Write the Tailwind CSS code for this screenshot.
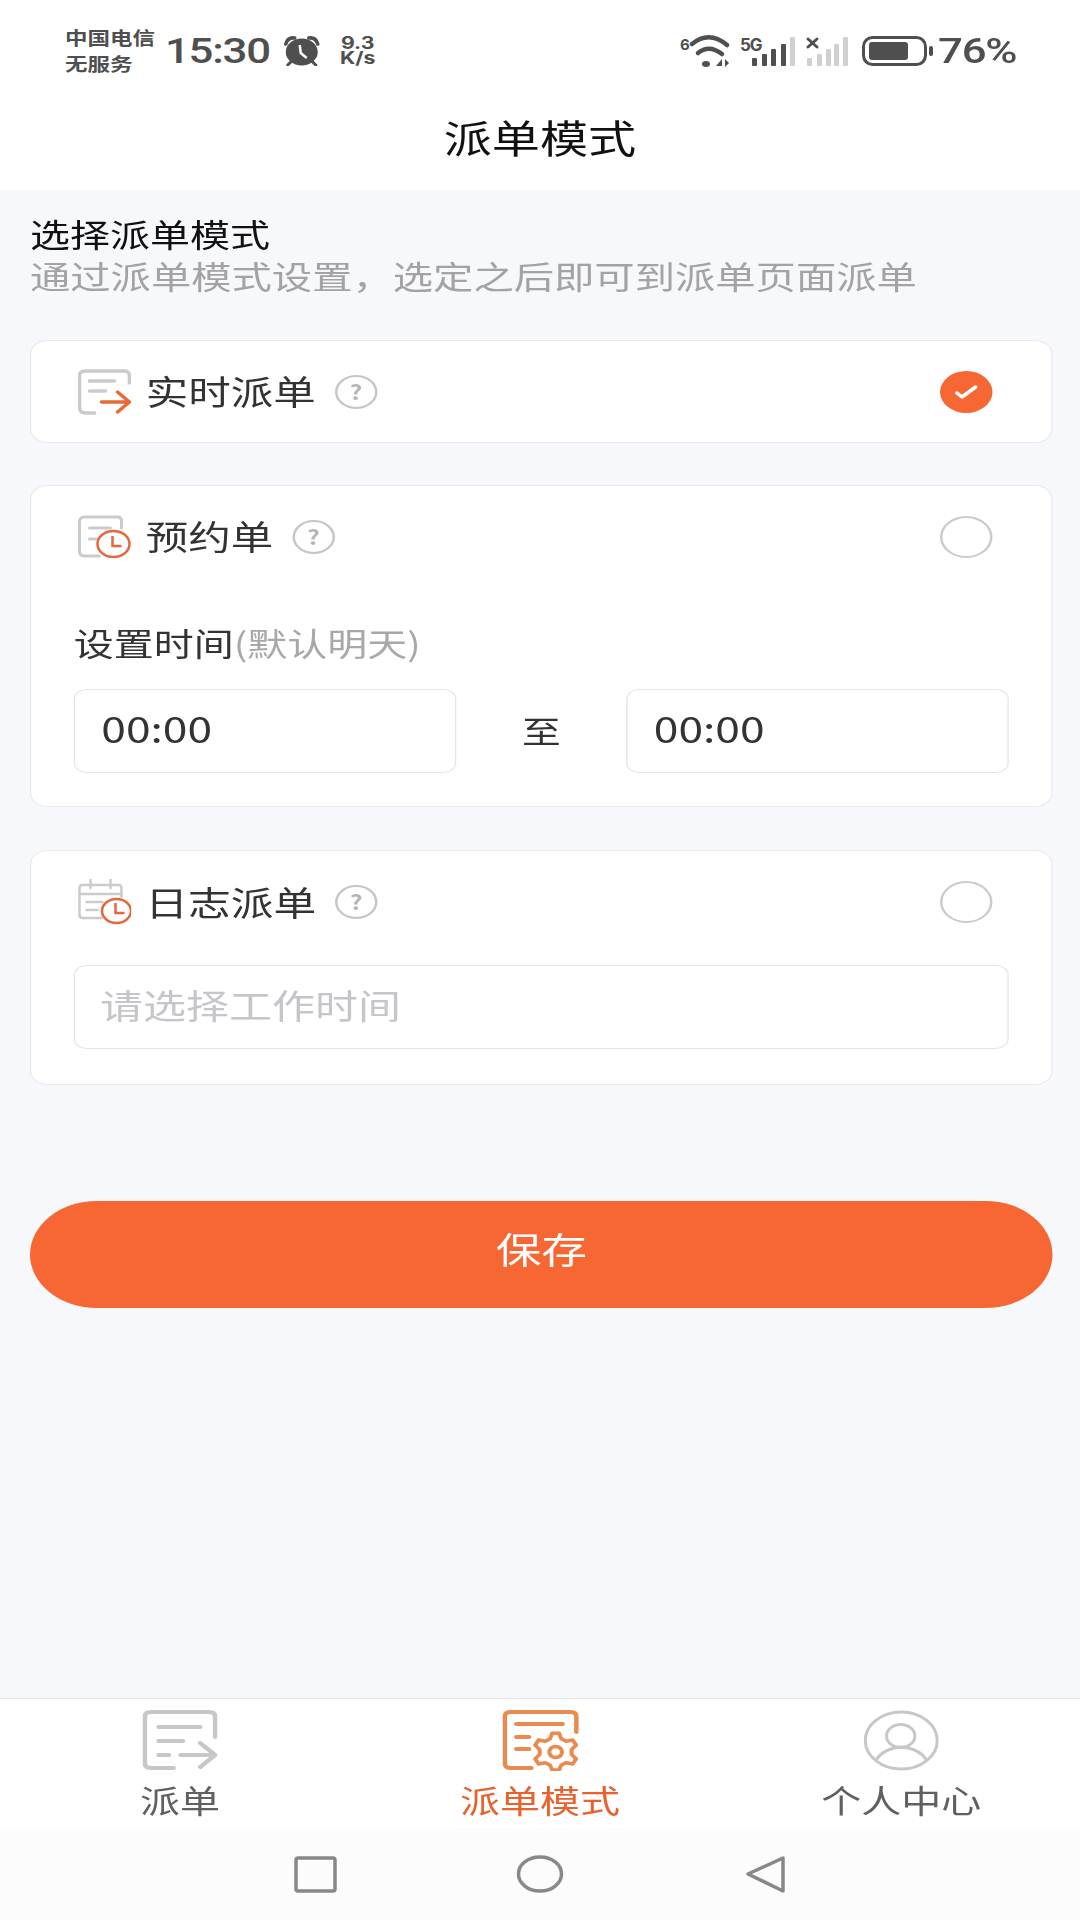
<!DOCTYPE html>
<html lang="zh-CN">
<head>
  <meta charset="UTF-8" />
  <meta name="viewport" content="width=device-width, initial-scale=1" />
  <title>派单模式</title>
  <script src="https://cdn.jsdelivr.net/npm/@tailwindcss/browser@4"></script>
</head>
<body class="w-[1080px] h-[1920px] overflow-hidden bg-[#f7f8fc]">
  <!-- the screenshot is stretched 1.25x sideways, so lay out at 864 wide and scale -->
  <div class="w-[864px] h-[1920px] origin-top-left scale-x-125 flex flex-col font-['Noto_Sans_CJK_SC',sans-serif] text-[#333]">

    <header class="bg-white h-[190px] shrink-0">
      <div class="h-[100px] pt-[24px] pl-[52px] pr-[51px] flex items-start text-[#4f4f4f]">
        <div class="w-[80px] text-[18px] leading-[26px] font-bold">
          <div>中国电信</div>
          <div>无服务</div>
        </div>
        <div class="h-[56px] flex items-center font-['Roboto',sans-serif] text-[35px] tracking-[-1px] font-medium">15:30</div>
        <svg class="mt-[12px] ml-[11px] w-[28.8px] h-[30px]" viewBox="0 0 36 30" preserveAspectRatio="none">
          <path d="M2 8 Q4 1 11 2 M25 2 Q32 1 34 8" fill="none" stroke="#4f4f4f" stroke-width="3.5" stroke-linecap="round" />
          <path d="M8 25 L4 29 M28 25 L32 29" stroke="#4f4f4f" stroke-width="3" stroke-linecap="round" />
          <ellipse cx="18" cy="16" rx="16" ry="13.5" fill="#4f4f4f" />
          <path d="M16 9 L17 17 L23 22" fill="none" stroke="#fff" stroke-width="2.5" />
        </svg>
        <div class="ml-[16px] mt-[12px] w-[29px] text-[17px] leading-[15px] font-bold font-['Inter',sans-serif] text-center">
          <div>9.3</div>
          <div>K/s</div>
        </div>
        <svg class="ml-auto mt-[6px] w-[208px] h-[40px]" viewBox="675 30 260 40" preserveAspectRatio="none">
          <text x="680" y="50" font-family="Inter, sans-serif" font-size="15" font-weight="700" fill="#4f4f4f">6</text>
          <g fill="none" stroke="#4f4f4f" stroke-linecap="round">
            <path d="M692 44 Q709 30 727 45" stroke-width="4.5" />
            <path d="M698 53 Q709 44 722 54" stroke-width="4.5" />
          </g>
          <ellipse cx="706" cy="64" rx="4" ry="3" fill="#4f4f4f" />
          <path d="M716 66 L722 59 L722 66 Z M725 59 L729 63 L725 67 Z" fill="#4f4f4f" />
          <text x="740" y="51" font-family="Inter, sans-serif" font-size="17" font-weight="700" fill="#4f4f4f" letter-spacing="-1">5G</text>
          <g fill="#4f4f4f">
            <rect x="752" y="58" width="5" height="8" rx="1" />
            <rect x="762" y="54" width="5" height="12" rx="1" />
            <rect x="771" y="49" width="5" height="17" rx="1" />
            <rect x="781" y="44" width="5" height="22" rx="1" />
          </g>
          <rect x="790" y="37" width="5" height="29" rx="1" fill="#d0d0d0" />
          <path d="M808 39 L817 47 M817 39 L808 47" stroke="#4f4f4f" stroke-width="3" stroke-linecap="round" />
          <g fill="#d0d0d0">
            <rect x="807" y="58" width="5" height="8" rx="1" />
            <rect x="817" y="54" width="5" height="12" rx="1" />
            <rect x="826" y="49" width="5" height="17" rx="1" />
            <rect x="834" y="44" width="5" height="22" rx="1" />
            <rect x="843" y="37" width="5" height="29" rx="1" />
          </g>
          <rect x="863.5" y="37.5" width="62" height="27" rx="9" fill="none" stroke="#4f4f4f" stroke-width="3" />
          <rect x="869" y="42" width="39" height="18" rx="3" fill="#4f4f4f" />
          <rect x="929" y="46" width="4" height="10" rx="2" fill="#4f4f4f" />
        </svg>
        <div class="ml-[2px] h-[56px] flex items-center font-['Roboto',sans-serif] text-[35px] tracking-[-1px] font-medium whitespace-nowrap">76%</div>
      </div>
      <div class="h-[72px] flex items-center justify-center text-[38.5px] text-[#111] leading-none">派单模式</div>
    </header>

    <main class="flex-1 pl-[24px] pr-[22px] pt-[21px]">
      <h2 class="text-[32px] leading-[44px] text-[#111]">选择派单模式</h2>
      <p class="text-[32.25px] leading-[40px] pb-[4px] text-[#a3a3a5] mb-[41px]">通过派单模式设置，选定之后即可到派单页面派单</p>

      <section class="bg-white border border-[#e9eaee] rounded-[14px] mb-[42px]">
        <div class="h-[101px] pl-[37px] pr-[47px] flex items-center">
          <svg class="w-[43.2px] h-[46px]" viewBox="0 0 54 46" preserveAspectRatio="none">
            <path d="M52 14 V7 Q52 2 47 2 H8 Q2 2 2 7 V38 Q2 44 8 44 H17" fill="none" stroke="#cbcbcb" stroke-width="3.5" stroke-linecap="round" />
            <path d="M12 12 H37 M12 22 H28" fill="none" stroke="#cbcbcb" stroke-width="3.5" stroke-linecap="round" />
            <path d="M24 33 H52 M40 23 L52 33 L40 43" fill="none" stroke="#ea6a35" stroke-width="3.5" stroke-linecap="round" stroke-linejoin="round" />
          </svg>
          <span class="ml-[11.5px] text-[34px] leading-[42px] pb-[2px]">实时派单</span>
          <span class="ml-[15px] w-[34px] h-[34px] rounded-full border-2 border-[#c6c6c6] flex items-center justify-center text-[20px] font-bold text-[#b5b5b5] leading-none">?</span>
          <span class="ml-auto w-[42px] h-[42px] rounded-full bg-[#f76733] flex items-center justify-center">
            <svg class="w-[20px] h-[16px]" viewBox="0 0 24 16" preserveAspectRatio="none">
              <path d="M3 9 L8 13 L21 3" fill="none" stroke="#fff" stroke-width="3.5" stroke-linecap="round" stroke-linejoin="round" />
            </svg>
          </span>
        </div>
      </section>

      <section class="bg-white border border-[#e9eaee] rounded-[14px] mb-[43px] h-[322px]">
        <div class="h-[101px] pl-[37px] pr-[47px] flex items-center">
          <svg class="w-[43.2px] h-[44px]" viewBox="0 0 54 44" preserveAspectRatio="none">
            <path d="M44 13 V6 Q44 2 40 2 H7 Q2 2 2 7 V36 Q2 41 7 41 H22" fill="none" stroke="#cbcbcb" stroke-width="3" stroke-linecap="round" />
            <path d="M12 13 H33 M12 24 H20" fill="none" stroke="#cbcbcb" stroke-width="3" stroke-linecap="round" />
            <ellipse cx="36" cy="29" rx="16" ry="13" fill="#fff" stroke="#e4683a" stroke-width="2.5" />
            <path d="M35 21 V31 H44" fill="none" stroke="#e4683a" stroke-width="2.5" />
          </svg>
          <span class="ml-[11.5px] text-[34px] leading-[42px] pb-[2px]">预约单</span>
          <span class="ml-[15px] w-[34px] h-[34px] rounded-full border-2 border-[#c6c6c6] flex items-center justify-center text-[20px] font-bold text-[#b5b5b5] leading-none">?</span>
          <span class="ml-auto w-[42px] h-[42px] rounded-full border-2 border-[#cbcbcb]"></span>
        </div>
        <div class="px-[34px] mt-[33px] mb-[25px] text-[32px] leading-[44px]">
          <span>设置时间</span><span class="text-[#a8a8a8]">(默认明天)</span>
        </div>
        <div class="px-[34px] flex items-center">
          <div class="w-[306px] h-[84px] pl-[21px] pb-[6px] flex items-center border border-[#e4e5ea] rounded-[10px] text-[35.5px]">00:00</div>
          <div class="flex-1 text-center text-[31px] leading-none pb-[4px]">至</div>
          <div class="w-[306px] h-[84px] pl-[21px] pb-[6px] flex items-center border border-[#e4e5ea] rounded-[10px] text-[35.5px]">00:00</div>
        </div>
      </section>

      <section class="bg-white border border-[#e9eaee] rounded-[14px] h-[235px]">
        <div class="h-[101px] pl-[37px] pr-[47px] flex items-center">
          <svg class="w-[43.2px] h-[46px]" viewBox="0 0 54 46" preserveAspectRatio="none">
            <path d="M44 18 V9 Q44 6 41 6 H5 Q2 6 2 9 V36 Q2 39 5 39 H24" fill="none" stroke="#cbcbcb" stroke-width="2.5" stroke-linecap="round" />
            <path d="M13 1 V9 M33 1 V9 M2 15 H44 M9 23 H25 M9 31 H20" fill="none" stroke="#cbcbcb" stroke-width="2.5" stroke-linecap="round" />
            <ellipse cx="39" cy="32" rx="14.5" ry="12" fill="#fff" stroke="#e4683a" stroke-width="2.5" />
            <path d="M38 24 V34 H47" fill="none" stroke="#e4683a" stroke-width="2.5" />
          </svg>
          <span class="ml-[11px] text-[34.2px] leading-[42px] pb-[2px]">日志派单</span>
          <span class="ml-[15px] w-[34px] h-[34px] rounded-full border-2 border-[#c6c6c6] flex items-center justify-center text-[20px] font-bold text-[#b5b5b5] leading-none">?</span>
          <span class="ml-auto w-[42px] h-[42px] rounded-full border-2 border-[#cbcbcb]"></span>
        </div>
        <div class="mx-[34px] mt-[13px] h-[84px] pl-[20px] pb-[5px] flex items-center border border-[#e4e5ea] rounded-[10px] text-[34.4px] text-[#c5c6ca]">请选择工作时间</div>
      </section>

      <button class="mt-[116px] w-full h-[107px] pb-[10px] rounded-full bg-[#f76733] text-white text-[36.5px]">保存</button>
    </main>

    <nav class="h-[131px] shrink-0 bg-white border-t border-[#e6e6e6] grid grid-cols-3">
      <div class="flex flex-col items-center pt-[11px]">
        <svg class="w-[60px] h-[61px]" viewBox="0 0 65 61" preserveAspectRatio="none">
          <path d="M63 27 V7 Q63 2 58 2 H7 Q2 2 2 7 V53 Q2 58 7 58 H27" fill="none" stroke="#c6c8c8" stroke-width="4" stroke-linecap="round" />
          <path d="M14 17 H50 M14 31 H35 M14 45 H23 M33 45 H62 M50 33 L63 45 L50 57" fill="none" stroke="#c6c8c8" stroke-width="4" stroke-linecap="round" stroke-linejoin="round" />
        </svg>
        <span class="mt-[6px] text-[32px] leading-[44px] text-[#606060]">派单</span>
      </div>
      <div class="flex flex-col items-center pt-[11px]">
        <svg class="w-[61px] h-[61px]" viewBox="0 0 66 61" preserveAspectRatio="none">
          <path d="M64 22 V7 Q64 2 59 2 H7 Q2 2 2 7 V53 Q2 58 7 58 H25" fill="none" stroke="#e98a4e" stroke-width="4" stroke-linecap="round" />
          <path d="M12 14 H52 M12 27 H23 M12 39 H23" fill="none" stroke="#e98a4e" stroke-width="4" stroke-linecap="round" />
          <path d="M41.2 28.8 L43 23.2 H49 L50.8 28.8 L55 31.3 L60.8 30 L63.7 35.2 L59.8 39.6 V44.4 L63.7 48.8 L60.8 54 L55 52.7 L50.8 55.2 L49 60 H43 L41.2 55.2 L37 52.7 L31.2 54 L28.3 48.8 L32.2 44.4 V39.6 L28.3 35.2 L31.2 30 L37 31.3 Z" fill="#fff" stroke="#e98a4e" stroke-width="3.5" stroke-linejoin="round" />
          <ellipse cx="46" cy="42" rx="5.5" ry="5.5" fill="none" stroke="#e98a4e" stroke-width="3.5" />
        </svg>
        <span class="mt-[6px] text-[32px] leading-[44px] text-[#e8622e]">派单模式</span>
      </div>
      <div class="flex flex-col items-center pt-[11px] pl-[2px]">
        <svg class="w-[60px] h-[61px]" viewBox="0 0 74 61" preserveAspectRatio="none">
          <ellipse cx="37" cy="30.5" rx="35.5" ry="28.5" fill="none" stroke="#c6c8c8" stroke-width="3" />
          <ellipse cx="36.5" cy="26" rx="14" ry="11.5" fill="none" stroke="#c6c8c8" stroke-width="3" />
          <path d="M12 50 Q20 38 37 37 Q54 38 62 50" fill="none" stroke="#c6c8c8" stroke-width="3" />
        </svg>
        <span class="mt-[6px] text-[32px] leading-[44px] text-[#606060]">个人中心</span>
      </div>
    </nav>

    <div class="h-[91px] shrink-0 bg-[#fcfcfc]">
      <svg class="w-[864px] h-[91px]" viewBox="0 1829 1080 91" preserveAspectRatio="none">
        <rect x="296" y="1858" width="39" height="33" rx="2" fill="none" stroke="#888" stroke-width="3.5" />
        <ellipse cx="540" cy="1874" rx="21.5" ry="17" fill="none" stroke="#888" stroke-width="3.5" />
        <path d="M783 1858 V1891 L748 1874 Z" fill="none" stroke="#888" stroke-width="3.5" stroke-linejoin="round" />
      </svg>
    </div>
  </div>
</body>
</html>
